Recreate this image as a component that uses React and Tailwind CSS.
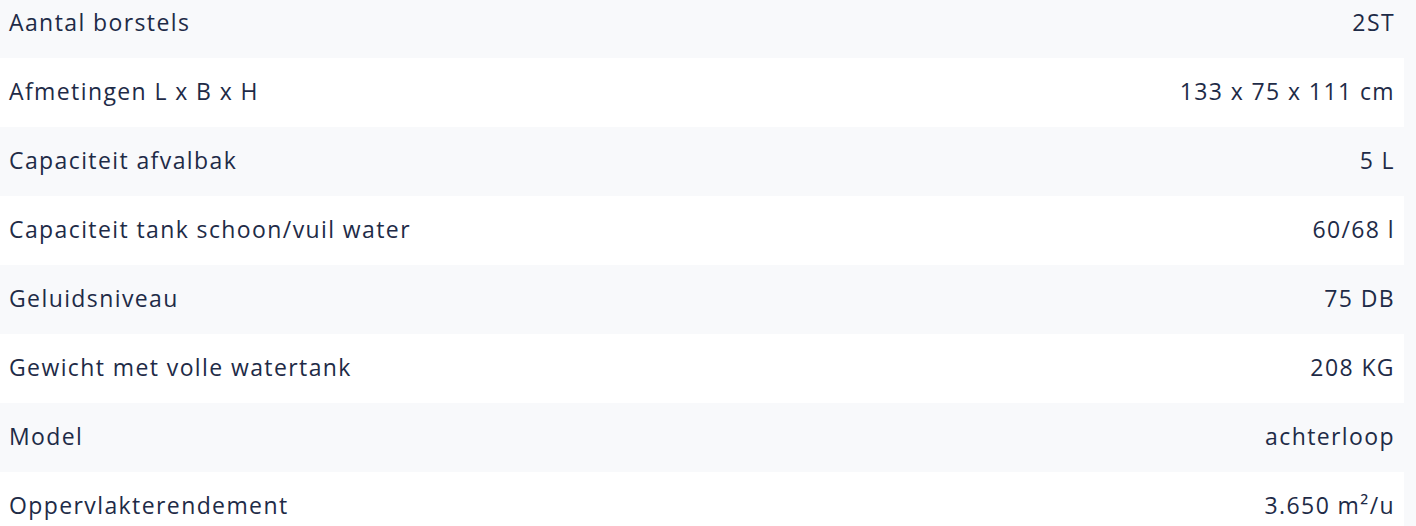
const specs = [
  ['Aantal borstels', '2ST'],
  ['Afmetingen L x B x H', '133 x 75 x 111 cm'],
  ['Capaciteit afvalbak', '5 L'],
  ['Capaciteit tank schoon/vuil water', '60/68 l'],
  ['Geluidsniveau', '75 DB'],
  ['Gewicht met volle watertank', '208 KG'],
  ['Model', 'achterloop'],
  ['Oppervlakterendement', '3.650 m²/u'],
];

export default function App() {
  return (
    <div className="h-[526px] overflow-hidden bg-[#f8f9fb] font-['Open_Sans',sans-serif] text-[#1e2b47]">
      <div className="w-[1404px] -mt-[11px]">
        {specs.map(([label, value], i) => (
          <div
            key={label}
            className={
              'flex h-[69px] items-center justify-between pl-[9px] pr-[9px] pb-[3px] text-[23px] tracking-[1.4px] ' +
              (i % 2 === 0 ? 'bg-[#f8f9fb]' : 'bg-white')
            }
          >
            <span>{label}</span>
            <span>{value}</span>
          </div>
        ))}
      </div>
    </div>
  );
}
